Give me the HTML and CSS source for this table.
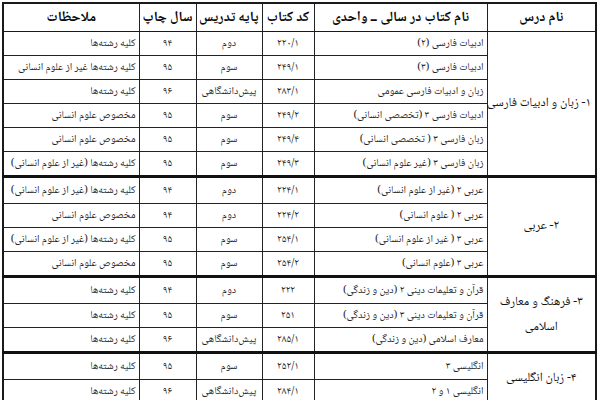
FILE: index.html
```html
<!DOCTYPE html>
<html lang="fa" dir="rtl">
<head>
<meta charset="utf-8">
<title>جدول کتاب‌ها</title>
<link rel="stylesheet" href="styles.css">
</head>
<body>
<table class="books">
  <colgroup>
    <col class="c-course">
    <col class="c-title">
    <col class="c-code">
    <col class="c-grade">
    <col class="c-year">
    <col class="c-note">
  </colgroup>
  <thead>
    <tr class="head">
      <th>نام درس</th>
      <th>نام کتاب در سالی ــ واحدی</th>
      <th>کد کتاب</th>
      <th>پایه تدریس</th>
      <th>سال چاپ</th>
      <th>ملاحظات</th>
    </tr>
  </thead>
  <tbody>
    <tr class="first">
      <td class="course" rowspan="6">۱- زبان و ادبیات فارسی</td>
      <td class="title">ادبیات فارسی (۲)</td>
      <td class="num">۲۲۰/۱</td>
      <td class="grade">دوم</td>
      <td class="num">۹۴</td>
      <td class="note">کلیه رشته‌ها</td>
    </tr>
    <tr>
      <td class="title">ادبیات فارسی (۳)</td>
      <td class="num">۲۴۹/۱</td>
      <td class="grade">سوم</td>
      <td class="num">۹۵</td>
      <td class="note">کلیه رشته‌ها غیر از علوم انسانی</td>
    </tr>
    <tr>
      <td class="title">زبان و ادبیات فارسی عمومی</td>
      <td class="num">۲۸۳/۱</td>
      <td class="grade">پیش‌دانشگاهی</td>
      <td class="num">۹۶</td>
      <td class="note">کلیه رشته‌ها</td>
    </tr>
    <tr>
      <td class="title">ادبیات فارسی ۳ (تخصصی انسانی)</td>
      <td class="num">۲۴۹/۲</td>
      <td class="grade">سوم</td>
      <td class="num">۹۵</td>
      <td class="note">مخصوص علوم انسانی</td>
    </tr>
    <tr>
      <td class="title">زبان فارسی ۳ ( تخصصی انسانی)</td>
      <td class="num">۲۴۹/۴</td>
      <td class="grade">سوم</td>
      <td class="num">۹۵</td>
      <td class="note">مخصوص علوم انسانی</td>
    </tr>
    <tr>
      <td class="title">زبان فارسی ۳ (غیر علوم انسانی)</td>
      <td class="num">۲۴۹/۳</td>
      <td class="grade">سوم</td>
      <td class="num">۹۵</td>
      <td class="note">کلیه رشته‌ها (غیر از علوم انسانی)</td>
    </tr>

    <tr class="first">
      <td class="course" rowspan="4">۲- عربی</td>
      <td class="title">عربی ۲ (غیر از علوم انسانی)</td>
      <td class="num">۲۲۴/۱</td>
      <td class="grade">دوم</td>
      <td class="num">۹۴</td>
      <td class="note">کلیه رشته‌ها (غیر از علوم انسانی)</td>
    </tr>
    <tr>
      <td class="title">عربی ۲ ( علوم انسانی)</td>
      <td class="num">۲۲۴/۲</td>
      <td class="grade">دوم</td>
      <td class="num">۹۴</td>
      <td class="note">مخصوص علوم انسانی</td>
    </tr>
    <tr>
      <td class="title">عربی ۳ ( غیر از علوم انسانی)</td>
      <td class="num">۲۵۴/۱</td>
      <td class="grade">سوم</td>
      <td class="num">۹۵</td>
      <td class="note">کلیه رشته‌ها (غیر از علوم انسانی)</td>
    </tr>
    <tr>
      <td class="title">عربی ۳ (علوم انسانی)</td>
      <td class="num">۲۵۴/۲</td>
      <td class="grade">سوم</td>
      <td class="num">۹۵</td>
      <td class="note">مخصوص علوم انسانی</td>
    </tr>

    <tr class="first">
      <td class="course" rowspan="3">۳- فرهنگ و معارف<br>اسلامی</td>
      <td class="title">قرآن و تعلیمات دینی ۲ (دین و زندگی)</td>
      <td class="num">۲۲۲</td>
      <td class="grade">دوم</td>
      <td class="num">۹۴</td>
      <td class="note">کلیه رشته‌ها</td>
    </tr>
    <tr>
      <td class="title">قرآن و تعلیمات دینی ۳ (دین و زندگی)</td>
      <td class="num">۲۵۱</td>
      <td class="grade">سوم</td>
      <td class="num">۹۵</td>
      <td class="note">کلیه رشته‌ها</td>
    </tr>
    <tr>
      <td class="title">معارف اسلامی (دین و زندگی)</td>
      <td class="num">۲۸۵/۱</td>
      <td class="grade">پیش‌دانشگاهی</td>
      <td class="num">۹۶</td>
      <td class="note">کلیه رشته‌ها</td>
    </tr>

    <tr class="first">
      <td class="course" rowspan="2">۴- زبان انگلیسی</td>
      <td class="title">انگلیسی ۳</td>
      <td class="num">۲۵۲/۱</td>
      <td class="grade">سوم</td>
      <td class="num">۹۵</td>
      <td class="note">کلیه رشته‌ها</td>
    </tr>
    <tr>
      <td class="title">انگلیسی ۱ و ۲</td>
      <td class="num">۲۸۴/۱</td>
      <td class="grade">پیش‌دانشگاهی</td>
      <td class="num">۹۶</td>
      <td class="note">کلیه رشته‌ها</td>
    </tr>
  </tbody>
</table>
</body>
</html>
```

FILE: styles.css
```css
html, body {
  margin: 0;
  padding: 0;
  background: #ffffff;
  overflow: hidden;
}

body {
  width: 600px;
  height: 400px;
  font-family: "Noto Naskh Arabic", "Noto Sans Arabic", "DejaVu Sans", sans-serif;
  color: #262626;
}

.books {
  direction: rtl;
  border-collapse: collapse;
  table-layout: fixed;
  width: 593px;
  margin: 2px 3px 0 4px;
  border: 2px solid #1a1a1a;
}

.c-course { width: 109px; }
.c-title { width: 173px; }
.c-code { width: 52px; }
.c-grade { width: 66px; }
.c-year { width: 57px; }
.c-note { width: 136px; }

.books th,
.books td {
  border: 1px solid #222;
  padding: 0 3px;
  white-space: nowrap;
  overflow: hidden;
}

.head th {
  height: 27px;
  font-size: 14px;
  font-weight: bold;
  color: #0a0a0a;
  text-align: center;
  vertical-align: middle;
  border-bottom: 1px solid #1a1a1a;
}

.books tbody td {
  height: 23px;
  font-size: 10.5px;
  vertical-align: middle;
}

.books tbody tr.first td {
  border-top: 3px solid #111;
  height: 25px;
}

.books tbody tr:first-child td {
  border-top: 1px solid #222;
  height: 23px;
}

.title,
.note {
  text-align: right;
}

.num,
.grade {
  text-align: center;
}

.grade {
  padding-top: 4px;
}

.books tbody td.course {
  text-align: center;
  font-size: 12.5px;
  color: #111;
  line-height: 25px;
  padding: 0 4px;
}
```
